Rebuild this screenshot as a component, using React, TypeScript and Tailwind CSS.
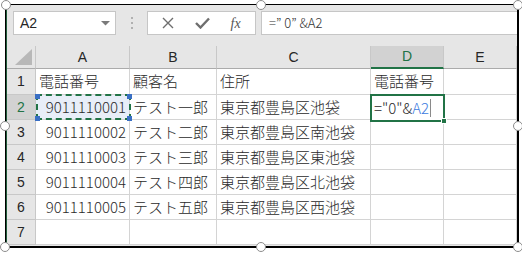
import React from "react";

const cols = [
  { name: "", w: "w-[29px]" },
  { name: "A", w: "w-[94px]" },
  { name: "B", w: "w-[87px]" },
  { name: "C", w: "w-[154px]" },
  { name: "D", w: "w-[73px]" },
  { name: "E", w: "w-[73px]" },
];

const rows: string[][] = [
  ["電話番号", "顧客名", "住所", "電話番号", ""],
  ["9011110001", "テスト一郎", "東京都豊島区池袋", "", ""],
  ["9011110002", "テスト二郎", "東京都豊島区南池袋", "", ""],
  ["9011110003", "テスト三郎", "東京都豊島区東池袋", "", ""],
  ["9011110004", "テスト四郎", "東京都豊島区北池袋", "", ""],
  ["9011110005", "テスト五郎", "東京都豊島区西池袋", "", ""],
  ["", "", "", "", ""],
];

const cellFont = { fontFamily: '"Noto Sans CJK JP", "Noto Sans", sans-serif' };
const uiFont = { fontFamily: '"Liberation Sans", Arial, sans-serif' };

function Handle({ x, y }: { x: number; y: number }) {
  return (
    <div
      className="absolute w-[10px] h-[10px] rounded-full bg-white border border-[#8c8c8c]"
      style={{ left: x - 5, top: y - 5 }}
    />
  );
}

function Toolbar() {
  return (
    <div className="h-[41px] bg-[#e6e6e6] flex items-start pt-[6px] pl-[6px]">
      <div className="w-[103px] h-[24px] bg-white border border-[#c6c6c6] flex items-center justify-between pl-[6px] pr-[5px]">
        <span className="text-[14px] text-[#262626]" style={uiFont}>A2</span>
        <svg width="9" height="5" viewBox="0 0 9 5">
          <polygon points="0,0 9,0 4.5,4.5" fill="#7a7a7a" />
        </svg>
      </div>
      <div className="w-[31px] h-[24px] flex flex-col items-center justify-center gap-[3px]">
        <div className="w-[2px] h-[2px] bg-[#b0b0b0]" />
        <div className="w-[2px] h-[2px] bg-[#b0b0b0]" />
        <div className="w-[2px] h-[2px] bg-[#b0b0b0]" />
      </div>
      <div className="w-[109px] h-[24px] bg-white border border-[#c6c6c6] flex items-center justify-around px-[4px]">
        <svg width="12" height="12" viewBox="0 0 12 12">
          <path d="M1 1 L11 11 M11 1 L1 11" stroke="#6e6e6e" strokeWidth="1.4" />
        </svg>
        <svg width="15" height="12" viewBox="0 0 15 12">
          <path d="M1 6 L5.5 10.5 L14 1.5" stroke="#6e6e6e" strokeWidth="2.4" fill="none" />
        </svg>
        <span className="italic text-[14px] text-[#555]" style={{ fontFamily: '"Liberation Serif", serif' }}>
          fx
        </span>
      </div>
      <div className="flex-1 ml-[5px] h-[24px] bg-white border-t border-b border-l border-[#c6c6c6] flex items-center pl-[7px]">
        <span className="text-[13px] text-[#333] font-light whitespace-pre" style={cellFont}>=” 0” &amp;A2</span>
      </div>
    </div>
  );
}

function Grid() {
  return (
    <div className="bg-white relative">
      <div className="flex h-[23px] bg-[#e6e6e6]">
        {cols.map((c, i) => (
          <div
            key={i}
            className={`${c.w} relative flex items-center justify-center text-[14px] border-r border-[#c8c8c8] ${
              c.name === "D"
                ? "bg-[#d2d2d2] text-[#217346] border-b-2 border-b-[#217346]"
                : "text-[#262626] border-b border-b-[#ababab]"
            }`}
            style={uiFont}
          >
            {i === 0 ? (
              <svg className="absolute right-[3px] bottom-[3px]" width="17" height="16" viewBox="0 0 17 16">
                <polygon points="17,0 17,16 0,16" fill="#b8b8b8" />
              </svg>
            ) : (
              c.name
            )}
          </div>
        ))}
      </div>
      {rows.map((r, ri) => (
        <div key={ri} className={`flex ${ri === 0 ? "h-[26px]" : "h-[25px]"}`}>
          <div
            className={`w-[29px] flex items-center justify-center text-[14px] border-r border-b border-[#c8c8c8] ${
              ri === 1 ? "bg-[#d2d2d2] text-[#217346]" : "bg-[#e6e6e6] text-[#262626]"
            }`}
            style={uiFont}
          >
            {ri + 1}
          </div>
          {r.map((v, ci) => {
            const numeric = /^\d+$/.test(v);
            return (
              <div
                key={ci}
                className={`${cols[ci + 1].w} flex items-center border-r border-b border-[#d4d4d4] text-[15px] font-light text-[#2a2a2a] whitespace-nowrap overflow-visible ${
                  numeric ? "justify-end pr-[3px]" : "justify-start pl-[3px]"
                } ${ri === 1 && ci === 0 ? "bg-[#e8eef8]" : ""}`}
                style={cellFont}
              >
                {v}
              </div>
            );
          })}
        </div>
      ))}

      {/* A2 reference marquee */}
      <div className="absolute left-[29px] top-[48px] w-[95px] h-[26px] border-2 border-dashed border-[#217346]" />
      <div className="absolute left-[28px] top-[48px] w-[5px] h-[5px] bg-[#3a6fc4]" />
      <div className="absolute left-[120px] top-[48px] w-[5px] h-[5px] bg-[#3a6fc4]" />
      <div className="absolute left-[28px] top-[70px] w-[5px] h-[5px] bg-[#3a6fc4]" />
      <div className="absolute left-[120px] top-[70px] w-[5px] h-[5px] bg-[#3a6fc4]" />

      {/* D2 active cell being edited */}
      <div
        className="absolute left-[363px] top-[48px] w-[75px] h-[28px] border-2 border-[#217346] bg-white flex items-center pl-[2px] text-[15px] font-light text-[#2a2a2a]"
        style={cellFont}
      >
        <span>="0"&amp;</span>
        <span className="text-[#3d7be0]">A2</span>
        <div className="w-[1px] h-[18px] bg-[#8a8a8a] ml-[1px]" />
      </div>
      <div className="absolute left-[434px] top-[72px] w-[6px] h-[6px] bg-[#217346] border border-white" />
    </div>
  );
}

export default function App() {
  return (
    <div className="w-[522px] h-[255px] bg-white relative overflow-hidden pt-[4px] pl-[5px]">
      <div className="w-[514px] h-[244px] border-t border-l border-r-2 border-b-2 border-black overflow-hidden">
        <div className="h-full border-l border-[#1f5c3a] bg-[#e6e6e6]">
          <Toolbar />
          <Grid />
        </div>
      </div>
      <Handle x={6} y={5} />
      <Handle x={261} y={5} />
      <Handle x={518} y={5} />
      <Handle x={5} y={126} />
      <Handle x={518} y={126} />
      <Handle x={5} y={247} />
      <Handle x={261} y={247} />
      <Handle x={518} y={247} />
    </div>
  );
}
